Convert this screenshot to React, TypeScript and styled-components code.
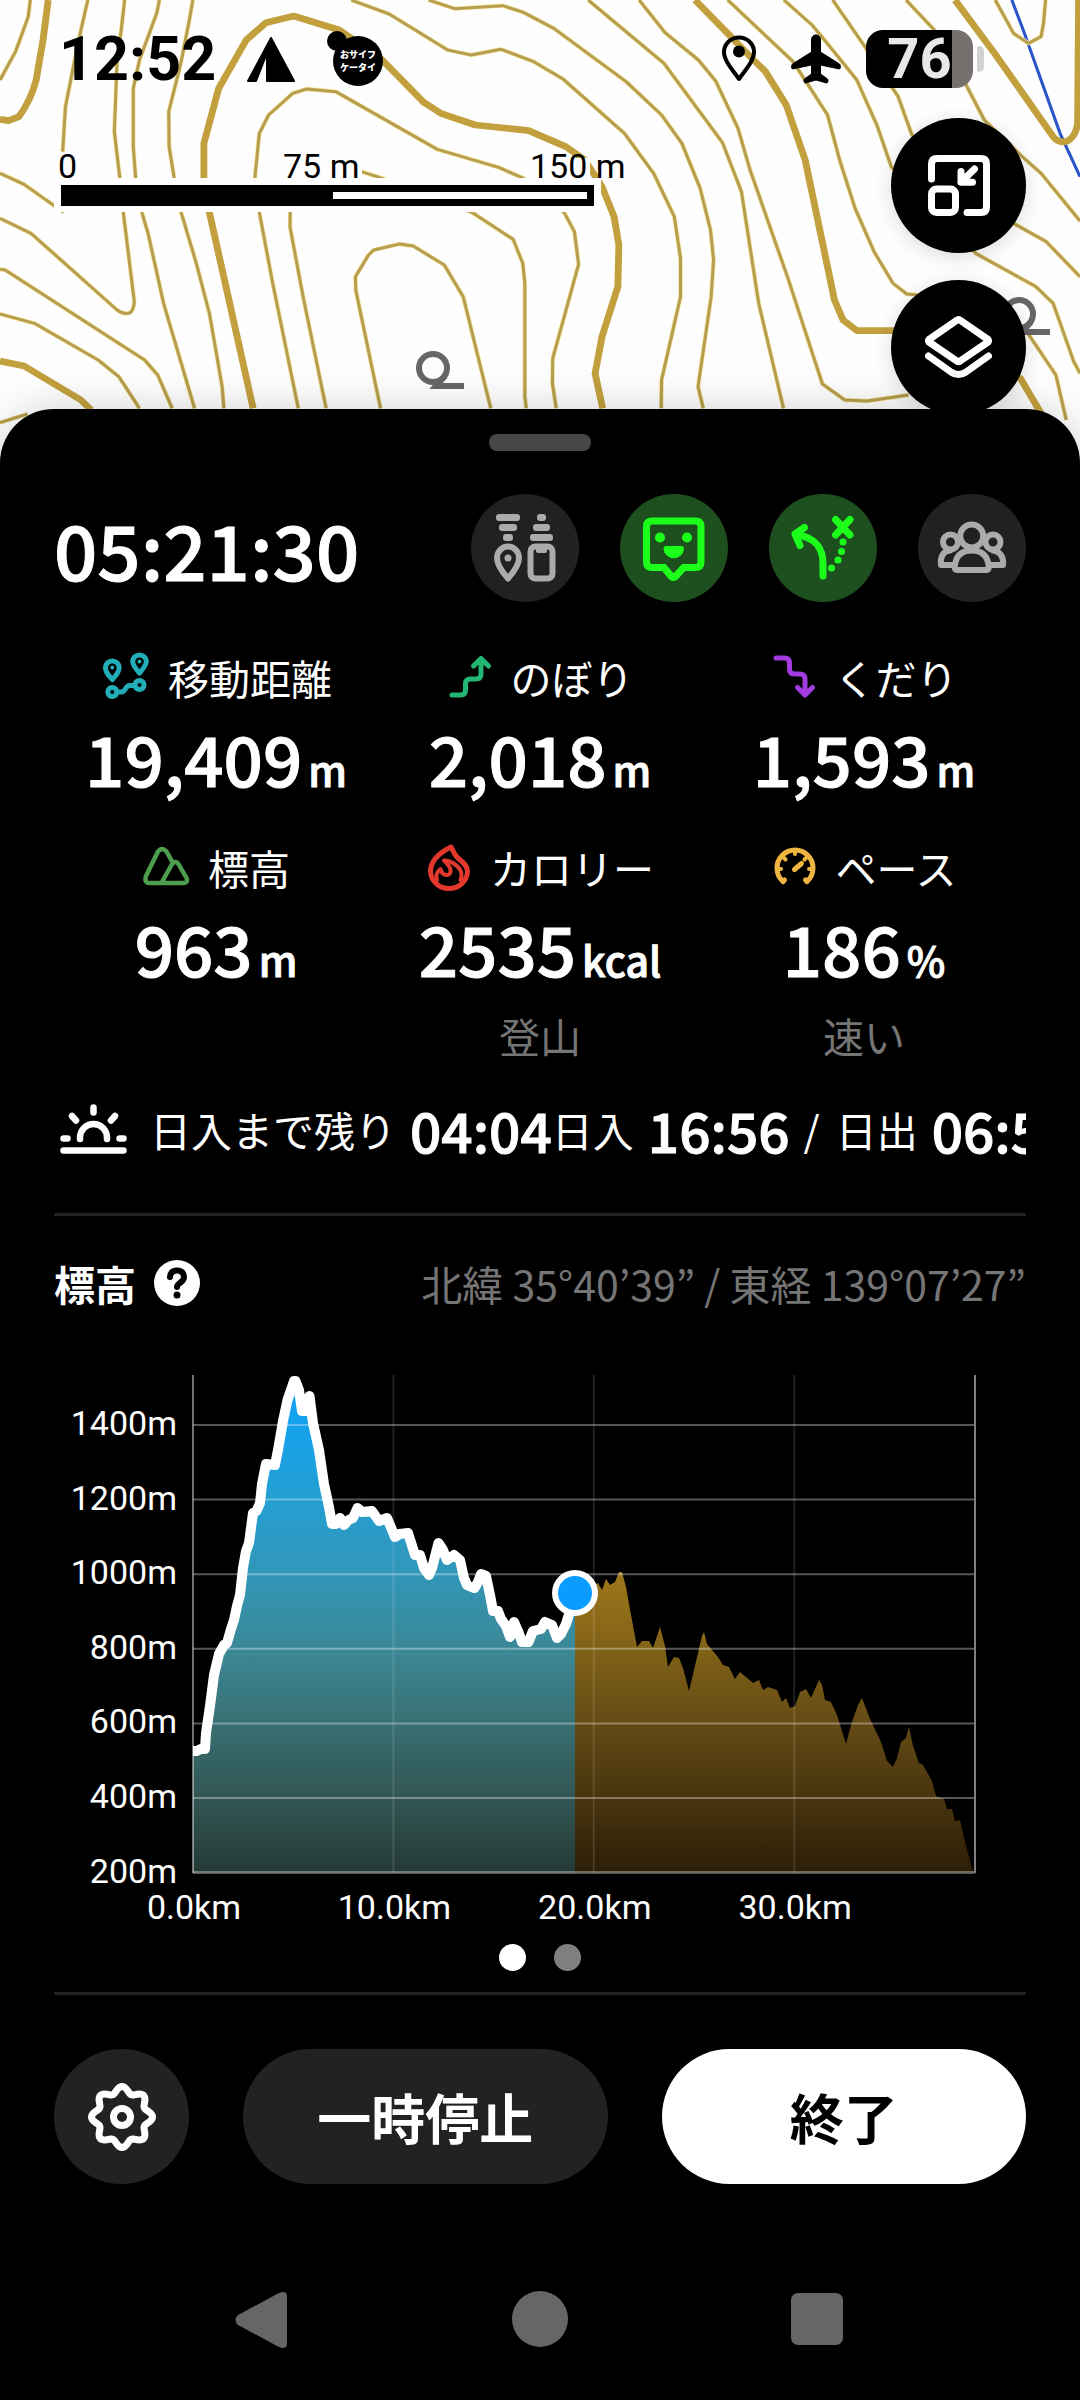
import React from "react";
import styled, { createGlobalStyle } from "styled-components";

const jp = `"Noto Sans CJK JP", "Noto Sans", sans-serif`;
const latin = `Roboto, "Noto Sans CJK JP", sans-serif`;

const GlobalStyle = createGlobalStyle`
  *, *::before, *::after { box-sizing: border-box; }
  html, body { margin: 0; background: #000; }
  body { font-family: ${jp}; color: #fff; overflow-x: hidden; }
  button { border: 0; padding: 0; font: inherit; color: inherit; cursor: pointer; }
  svg { display: block; flex: none; }
  h2, p, dl, dt, dd { margin: 0; font-weight: inherit; font-size: inherit; }
`;

const Page = styled.div`
  display: flex;
  flex-direction: column;
  min-height: 100vh;
`;

/* ---------- map ---------- */

const MapArea = styled.section`
  position: relative;
  height: 472px;
  background: #fefefe;
  overflow: hidden;
`;

const MapCanvas = styled.svg`
  position: absolute;
  inset: 0;
  width: 100%;
  height: 100%;
`;

const MapOverlay = styled.div`
  position: relative;
  display: flex;
  flex-direction: column;
`;

const StatusBar = styled.header`
  display: flex;
  align-items: center;
  justify-content: space-between;
  height: 118px;
  padding: 0 96px 0 59px;
  color: #000;
`;

const StatusGroup = styled.div<{ $gap: number }>`
  display: flex;
  align-items: center;
  gap: ${(p) => p.$gap}px;
`;

const Clock = styled.time`
  font: 700 61px/62px ${latin};
`;

const Battery = styled.div`
  display: flex;
  align-items: center;
  gap: 4px;
`;

const BatteryBody = styled.div`
  display: flex;
  align-items: center;
  justify-content: center;
  width: 107px;
  height: 58px;
  border-radius: 17px;
  background: linear-gradient(to right, #000 80%, #76706f 80%);
  color: #e8e8e8;
  font: 700 56px/58px ${latin};
`;

const BatteryTip = styled.div`
  width: 7px;
  height: 26px;
  border-radius: 2px 5px 5px 2px;
  background: #d2d0d0;
`;

const MapTools = styled.div`
  display: flex;
  justify-content: space-between;
  align-items: flex-start;
  padding: 0 54px 0 58px;
`;

const ScaleBar = styled.div`
  padding-top: 28px;
  color: #000;
`;

const ScaleLabels = styled.div`
  display: grid;
  grid-template-columns: 225px 247px auto;
  font: 400 34px/40px ${latin};
`;

const ScaleRule = styled.div`
  width: 533px;
  height: 21px;
  margin: -1px 0 0 3px;
  border: 7px solid #000;
  background: linear-gradient(to right, #000 51%, #fff 51%);
`;

const Fabs = styled.div`
  display: flex;
  flex-direction: column;
  gap: 27px;
`;

const Fab = styled.button`
  display: grid;
  place-items: center;
  width: 135px;
  height: 135px;
  border-radius: 50%;
  background: #000;
  color: #fff;
  box-shadow: 0 4px 20px rgba(0, 0, 0, 0.14);
`;

/* ---------- sheet ---------- */

const Sheet = styled.main`
  position: relative;
  display: flex;
  flex-direction: column;
  flex: 1;
  margin-top: -63px;
  padding: 25px 54px 0;
  border-radius: 54px 54px 0 0;
  background: #000;
  box-shadow: 0 0 44px rgba(0, 0, 0, 0.18);
`;

const Handle = styled.div`
  align-self: center;
  width: 102px;
  height: 17px;
  border-radius: 8px;
  background: #474747;
`;

const TimerRow = styled.div`
  display: flex;
  align-items: center;
  justify-content: space-between;
  margin-top: 43px;
`;

/* A medium cut with a thin outline: digits stay narrow but read as semibold. */
const Figure = styled.span`
  font-weight: 500;
  -webkit-text-stroke: 1px currentColor;
`;

const Timer = styled(Figure).attrs({ as: "time" })`
  font-size: 76px;
  line-height: 108px;
`;

const Toggles = styled.div`
  display: flex;
  gap: 41px;
`;

const Toggle = styled.button<{ $on?: boolean }>`
  display: grid;
  place-items: center;
  width: 108px;
  height: 108px;
  border-radius: 50%;
  background: ${(p) => (p.$on ? "#1e4f1e" : "#212121")};
  color: ${(p) => (p.$on ? "#1bff1b" : "#ababab")};
`;

const Stats = styled.dl`
  display: grid;
  grid-template-columns: repeat(3, 1fr);
  row-gap: 47px;
  margin-top: 52px;
`;

const Stat = styled.div`
  display: flex;
  flex-direction: column;
  align-items: center;
`;

const StatLabel = styled.dt`
  display: flex;
  align-items: center;
  gap: 18px;
  height: 46px;
  font-size: 41px;
  line-height: 46px;
  white-space: nowrap;
`;

const StatValue = styled(Figure).attrs({ as: "dd" })`
  display: flex;
  align-items: baseline;
  gap: 6px;
  height: 80px;
  margin-top: 17px;
  font-size: 69px;
  line-height: 80px;
`;

const Unit = styled.span`
  font-size: 41px;
`;

const StatNote = styled.dd`
  margin-top: 24px;
  color: #757575;
  font-size: 41px;
  line-height: 48px;
`;

const SunRow = styled.div`
  display: flex;
  align-items: center;
  height: 80px;
  margin-top: 30px;
  padding-left: 4px;
  overflow: hidden;
  white-space: nowrap;
  font-size: 41px;
  line-height: 80px;
`;

const SunText = styled.span<{ $before?: number }>`
  margin-left: ${(p) => p.$before ?? 0}px;
`;

const SunTime = styled(Figure).attrs({ as: "time" })`
  margin-left: 14px;
  font-size: 55px;
`;

const Divider = styled.hr<{ $top: number }>`
  width: 100%;
  height: 3px;
  margin: ${(p) => p.$top}px 0 0;
  border: 0;
  background: #222;
`;

const ChartHeader = styled.div`
  display: flex;
  align-items: center;
  justify-content: space-between;
  height: 46px;
  margin-top: 44px;
  font-size: 41px;
  line-height: 46px;
`;

const ChartTitle = styled.div`
  display: flex;
  align-items: center;
  gap: 18px;
  font-weight: 700;
`;

const HelpButton = styled.button`
  display: grid;
  place-items: center;
  width: 46px;
  height: 46px;
  border-radius: 50%;
  background: #fff;
  color: #000;
`;

const Coordinates = styled.p`
  color: #757575;
`;

const Chart = styled.svg`
  width: 100%;
  height: auto;
  margin-top: 44px;
  font: 400 34px ${latin};
`;

const Dots = styled.div`
  display: flex;
  justify-content: center;
  gap: 28px;
  margin-top: 14px;
`;

const Dot = styled.button<{ $active?: boolean }>`
  width: 27px;
  height: 27px;
  border-radius: 50%;
  background: ${(p) => (p.$active ? "#fff" : "#808080")};
`;

const Actions = styled.div`
  display: grid;
  grid-template-columns: 135px 1fr 1fr;
  gap: 54px;
  margin-top: 54px;
`;

const Action = styled.button<{ $primary?: boolean }>`
  display: grid;
  place-items: center;
  height: 135px;
  border-radius: 68px;
  background: ${(p) => (p.$primary ? "#fff" : "#222")};
  color: ${(p) => (p.$primary ? "#000" : "#fff")};
  font-weight: 700;
  font-size: 54px;
  line-height: 64px;
`;

const NavBar = styled.nav`
  display: flex;
  align-items: center;
  justify-content: space-between;
  padding: 107px 181px 53px;
`;

const NavButton = styled.button`
  display: grid;
  place-items: center;
  width: 56px;
  height: 56px;
  background: none;
  color: #666;
`;

/* ---------- map data ---------- */

const minorContours = [
  "M88 0 82 50 45 155 0 240",
  "M255 0 235 90 215 190 190 320 182 455",
  "M362 0 352 90 340 180 332 395 348 535 358 637 390 905Q388 930 378 938Q362 946 340 930L90 700 0 655",
  "M463 0 455 40 405 180 387 265 387 440 394 535 412 637 430 700 475 910 565 1225",
  "M560 0 548 70 525 190 490 335 491 440 506 535 526 637 570 790 608 940 625 1040 645 1160 650 1225",
  "M866 1225 790 840 753 637 740 535 753 400 780 345 850 280 890 267 975 275 1270 448 1450 503 1520 535 1638 637 1668 695 1680 793 1605 1075 1604 1150 1615 1225",
  "M947 1225 880 890 842 680 843 600 870 500 900 488 950 488 1050 515 1110 535 1370 637 1490 718 1518 790 1524 850 1524 1190 1528 1225",
  "M1105 1225 1033 870 1032 830 1070 765 1085 750 1160 732 1200 738 1290 795 1345 890 1425 1225",
  "M0 520 70 553 120 590 185 637",
  "M0 808 15 810 420 1080 458 1125 500 1225",
  "M0 942 100 970 285 1080 345 1130 405 1225",
  "M0 1268 80 1242",
  "M1020 0 1130 42 1300 150 1368 165 1455 148 1550 185 1636 238 1813 400 1898 520 1958 650 1976 775 1976 890 1921 1140 1920 1225",
  "M1245 0 1320 26 1460 17 1520 37 1608 85 1818 245 1921 345 1980 430 2033 565 2063 690 2072 780 2065 890 2027 1160 2042 1225",
  "M1708 0 1928 190 2098 428 2153 575 2203 910 2275 1225",
  "M1856 0 1931 98 2028 180 2078 243 2143 385 2178 510 2288 835 2388 1152 2453 1200 2518 1203 2638 1185",
  "M2113 0 2303 185 2403 345 2438 480 2483 625 2538 755 2593 850 2633 882 2658 884 2978 990 3066 1125 3096 1260",
  "M2276 0 2358 75 2398 125 2488 240 2548 380 2588 500 2833 760 3008 860 3058 910 3118 1085 3136 1120",
  "M2418 0 2508 135 2608 290 2648 405 2943 670 3038 725 3136 830",
  "M2631 0 2713 90 2768 180 2858 360 2963 465 3023 520 3136 663",
  "M2890 0 2943 100 2986 130 3023 110 3030 70 3036 0",
];

const majorContours = [
  "M140 0 125 120 105 240Q90 300 55 350L25 362 0 358",
  "M735 1225 608 637 592 535 592 430 635 265 715 120 772 68 853 48 985 90 1020 115 1110 180 1230 307 1280 340 1380 375 1535 392 1643 440 1698 480 1748 560 1783 650 1797 735 1794 860 1748 1010 1728 1120 1750 1225",
  "M0 1083 70 1098 235 1200 265 1230",
  "M2018 0 2113 100 2188 180 2223 215 2283 315 2338 480 2423 900 2448 960 2488 992 2598 992 2963 1135 3023 1240",
  "M2773 0 2888 160 3058 410Q3072 430 3098 424Q3124 410 3129 370L3132 0",
];

/* ---------- elevation data, in chart units ---------- */

const walked =
  "0,376 4,376 7.5,374 12,374 13,358 17,331 21,300 26,279 31,270 34,268 38,254 41,245 44,231 47,220 50,193 53,176 56,168 60,138 63.5,136 67,128 69,109 73,89 82,90 85,75 90,46 94.5,25 98,15 101,6 102.5,6 106,15 109,36 113,36 116.5,21 120,48 126,75 131,109 136,132 139,149 143,149 147,143 151,150 155.5,145 160,143 164.5,133 169,137 179,136 186,146 194,143 202,162 206.5,159 215,158 222,180 227,180 231,193 236,200 239,193 245.5,168 249.5,174 254,185 261,180 267,185 271,203 274,210 281.5,213 285,207 288,199 293,201 297,220 300,236 305,236 308,244 313,251 317,262 321,247 325,256 329,267 335.5,267 340,256 348,254 352,247 359,250 364,263 368,259 373,249 377,236 382,218";

const planned =
  "382,218 405,208 409,215 413,204 417,210 422,207 426,197 429,197 433,212 438,240 444,272 449,266 456,266 460,273 467,252 472,271 475,292 481,282 486,283 490,293 496,316 501,295 509,261 511,257 514,269 525,282 530,290 536,292 542,304 547,297 560,308 566,305 570,315 575,312 584,315 589,327 593,323 597,333 602,331 607,317 613,314 618,323 626,305 629,310 632,325 638,327 644,340 653,369 658,350 665,330 669,323 677,344 688,367 694,386 700,392 704,383 708,367 713,363 716,352 720,371 726,388 730,390 739,406 743,421 751,424 754,434 759,434 762,446 767,445 772,467 779,493 781,498";

const plotWidth = 782;
const plotHeight = 498;
const elevations = [1400, 1200, 1000, 800, 600, 400, 200].map((m, i) => ({ m, y: 50 + i * 74.6 }));
const distances = [0, 10, 20, 30].map((km) => ({ km, x: km * 20.04 }));

const gearPath =
  Array.from({ length: 161 }, (_, i) => {
    const a = (i / 160) * Math.PI * 2;
    const r = 27.3 + 3.2 * Math.cos(8 * a);
    return `${i ? "L" : "M"}${(34 + r * Math.cos(a)).toFixed(1)} ${(34 + r * Math.sin(a)).toFixed(1)}`;
  }).join("") + "Z";

/* ---------- icons ---------- */

type IconProps = { w: number; h: number; stroke?: number; color?: string; children: React.ReactNode };

const Icon = ({ w, h, stroke = 5, color = "currentColor", children }: IconProps) => (
  <svg
    width={w}
    height={h}
    viewBox={`0 0 ${w} ${h}`}
    fill="none"
    stroke={color}
    strokeWidth={stroke}
    strokeLinecap="round"
    strokeLinejoin="round"
    aria-hidden="true"
  >
    {children}
  </svg>
);

const TentIcon = () => (
  <Icon w={50} h={46} stroke={2}>
    <path fill="currentColor" d="M25 2 48 45H21V17L10 45H2Z" />
  </Icon>
);

const WalletIcon = () => (
  <svg width="58" height="58" viewBox="0 0 58 58">
    <circle cx="11" cy="11" r="10" />
    <circle cx="32" cy="31" r="25" />
    <g fill="#fff" fontFamily="Noto Sans CJK JP, sans-serif" fontWeight="900" fontSize="9" textAnchor="middle">
      <text x="32" y="28">おサイフ</text>
      <text x="32" y="41">ケータイ</text>
    </g>
  </svg>
);

const LocationIcon = () => (
  <Icon w={36} h={48} stroke={4}>
    <path d="M18 44C10 33 3 25 3 17a15 14.500 0 0 1 30 0C33 25 26 33 18 44Z" />
    <circle cx="18" cy="16.500" r="6" fill="currentColor" stroke="none" />
  </Icon>
);

const PlaneIcon = () => (
  <Icon w={50} h={50} stroke={1}>
    <path
      fill="currentColor"
      d="M25 1c3 0 4.500 2 4.500 5v12l19 12c1 1 1.500 4 0 5l-19-4v9l7 5c1 1 .5 4-1 4L25 46l-10.500 3c-1.500 0-2-3-1-4l7-5v-9l-19 4c-1.500-1-1-4 0-5l19-12V6c0-3 1.500-5 4.500-5Z"
    />
  </Icon>
);

const ShrinkIcon = () => (
  <Icon w={66} h={66} stroke={7}>
    <path d="M5.500 26V11Q5.500 5.500 11 5.500H55Q60.500 5.500 60.500 11V54Q60.500 59.500 55 59.500H41" />
    <rect x="5.500" y="36" width="24" height="23.500" rx="5" />
    <path d="M48.500 16 35 29M35 18.500V29.300H46.500" />
  </Icon>
);

const LayersIcon = () => (
  <Icon w={68} h={66} stroke={7}>
    <path d="M32 5.200Q33.400 4 35 5.200L63 24.500Q64 25.700 63 27L35 46.200Q33.400 47.200 32 46.200L4 27Q3 25.700 4 24.500Z" />
    <path d="M3.500 41 26 57Q33.400 62 41 57L63.500 41" />
  </Icon>
);

const DeviceSyncIcon = () => (
  <Icon w={64} h={72}>
    <g fill="currentColor" stroke="none">
      <rect x="3" y="2" width="24" height="7" rx="3" />
      <rect x="6" y="12" width="18" height="7" rx="3" />
      <rect x="10" y="22" width="10" height="7" rx="3" />
      <rect x="44" y="2" width="9" height="7" rx="3" />
      <rect x="40" y="12" width="17" height="7" rx="3" />
      <rect x="37" y="22" width="23" height="7" rx="3" />
      <circle cx="15" cy="46" r="3.500" />
      <rect x="43" y="35" width="11" height="6" rx="2" />
    </g>
    <path d="M15 66.500Q4 54 4 46a11 11.500 0 0 1 22 0Q26 54 15 66.500Z" strokeWidth="6" />
    <rect x="37.500" y="34.500" width="22" height="32" rx="5" strokeWidth="6" />
  </Icon>
);

const FaceIcon = () => (
  <Icon w={68} h={68} stroke={7}>
    <path d="M24.500 53.500H12Q6.500 53.500 6.500 48V12.500Q6.500 7 12 7H55.500Q61 7 61 12.500V48Q61 53.500 55.500 53.500H43.500L36 62Q33.500 65 31 62Z" />
    <path d="M26 53.500H42" stroke="#1e4f1e" strokeWidth="8" strokeLinecap="butt" />
    <path d="M24 53.500 31 62Q33.500 65 36 62L43.500 53.500" />
    <g fill="currentColor" stroke="none">
      <circle cx="20" cy="23.500" r="5" />
      <circle cx="47" cy="23.500" r="5" />
      <path d="M26 32H41Q44 32 44 35A10.300 10.300 0 0 1 23.500 35Q23.500 32 26 32Z" />
    </g>
  </Icon>
);

const RouteIcon = () => (
  <Icon w={68} h={68} stroke={7}>
    <path d="M34 62V50C34 34 27 24 8 20.500M15.500 13.500 6 20 11 31.500" />
    <path d="M46.500 5.500 61 21M61 5.500 46.500 21" />
    <g fill="currentColor" stroke="none">
      <circle cx="42.500" cy="54" r="3.500" />
      <circle cx="49" cy="46" r="3.500" />
      <circle cx="52.500" cy="37.500" r="3.500" />
      <circle cx="54" cy="28" r="3.500" />
    </g>
  </Icon>
);

const GroupIcon = () => (
  <Icon w={70} h={58} stroke={6}>
    <circle cx="13.500" cy="23" r="7.500" />
    <circle cx="56" cy="23" r="7.500" />
    <path d="M15 46H4C3 38 6 32 13 31.500M54 46H66C67 38 63 32 56 31.500" />
    <circle cx="34.700" cy="17" r="11.500" fill="#212121" />
    <path d="M20 51Q17.500 51 17.700 48C18.500 37 24 31.500 34.700 31.500S51 37 51.700 48Q52 51 49.500 51Z" fill="#212121" />
  </Icon>
);

const DistanceIcon = () => (
  <Icon w={50} h={50} color="#22aeb8">
    <path d="M12.300 27.500Q5 20 5.500 15.500a6.800 6.500 0 0 1 13.600 0Q19.500 20 12.300 27.500ZM39.500 21Q32.500 13 32.700 9.500a6.800 6.500 0 0 1 13.600 0Q46.500 13 39.500 21Z" />
    <circle cx="12.300" cy="40" r="4.500" />
    <circle cx="39.500" cy="33" r="4.500" />
    <path d="M17 40H21C27 40 24 33.500 30 33.500H35" />
    <circle cx="12.300" cy="15.500" r="1" strokeWidth="2" />
    <circle cx="39.500" cy="9.500" r="1" strokeWidth="2" />
  </Icon>
);

const AscentIcon = () => (
  <Icon w={46} h={48} color="#22b573">
    <path d="M5 42H13.500Q18.500 42 18.500 37V31Q18.500 26 23.500 26H29Q34 26 34 21V6M26.500 13 34 5.500 41.500 13" />
  </Icon>
);

const DescentIcon = () => (
  <Icon w={46} h={48} color="#a23be0">
    <path d="M5 5H13.500Q18.500 5 18.500 10V16Q18.500 21 23.500 21H29Q34 21 34 26V41M26.500 34.500 34 42 41.500 34.500" />
  </Icon>
);

const MountainIcon = () => (
  <Icon w={48} h={44} stroke={4.5} color="#4c9e4c">
    <path d="M31 18 24.500 6.500Q20 1.500 16 6.500L4 31Q2 38 7.500 38H41Q46.500 38 44.500 33L37 20Q33.500 14 29.500 20L20 37" />
  </Icon>
);

const FlameIcon = () => (
  <Icon w={46} h={50} color="#e2382e">
    <path d="M25 5C17 9 4.500 17 4.500 29.500A18.500 17.500 0 0 0 23 46.500A18.500 17.500 0 0 0 41.500 29.500C41.500 21 32 18 29 12.500Q27 8.500 25 5Z" />
    <path d="M11 38C9.500 34 11 30 14.500 27Q16 33 20.500 33C24 33 25.500 29.500 24 26C23 23 21 22 18 18.500C26 18.500 36 26 35.500 33Q35.500 36 34.500 38" strokeWidth="4" />
  </Icon>
);

const PaceIcon = () => (
  <Icon w={46} h={46} color="#efb541">
    <path d="M11 37.500A18 18 0 1 1 35 37.500" />
    <path d="M23 6.500V10M6 25H9M37 25H40M11.500 13.500 13.500 15.500M34.500 13.500 32.500 15.500" strokeWidth="4" />
    <path d="M11 37.500 12.500 36M35 37.500 33.500 36M22.500 25.500 29.500 19.500" />
  </Icon>
);

const SunsetIcon = () => (
  <Icon w={72} h={54} stroke={6.5}>
    <path d="M5.500 48.500H65.500M5.500 36.500H9.500M61.500 36.500H65.500M22 37V35.500a13.500 13.500 0 0 1 27 0V37M35.500 5.500V10.500M14 14 18 18.500M57 14 53 18.500" />
  </Icon>
);

const GearIcon = () => (
  <Icon w={68} h={68} stroke={7}>
    <path d={gearPath} />
    <circle cx="34" cy="34" r="8.500" />
  </Icon>
);

const QuestionIcon = () => (
  <Icon w={30} h={36} stroke={6}>
    <path d="M8 12Q8.500 5.500 15 5.500T22 12Q22 15 18.500 17.500T15 22" />
    <circle cx="15" cy="30" r="3.500" fill="currentColor" stroke="none" />
  </Icon>
);

/* ---------- screen ---------- */

const stats = [
  { label: "移動距離", value: "19,409", unit: "m", icon: <DistanceIcon /> },
  { label: "のぼり", value: "2,018", unit: "m", icon: <AscentIcon /> },
  { label: "くだり", value: "1,593", unit: "m", icon: <DescentIcon /> },
  { label: "標高", value: "963", unit: "m", icon: <MountainIcon /> },
  { label: "カロリー", value: "2535", unit: "kcal", icon: <FlameIcon />, note: "登山" },
  { label: "ペース", value: "186", unit: "%", icon: <PaceIcon />, note: "速い" },
];

const ContourMap = () => (
  <MapCanvas viewBox="0 0 1080 472" preserveAspectRatio="xMinYMin slice" aria-hidden="true">
    <g transform="scale(0.34439 0.33333)" fill="none" strokeLinejoin="round">
      <path d="M2938 0 2973 95 3078 400 3136 530" stroke="#2a55c8" strokeWidth="9" />
      {minorContours.map((d) => (
        <g key={d}>
          <path d={d} stroke="#f8e6a0" strokeWidth="13" />
          <path d={d} stroke="#b69f50" strokeWidth="9" />
        </g>
      ))}
      {majorContours.map((d) => (
        <path key={d} d={d} stroke="#c3a03e" strokeWidth="20" />
      ))}
    </g>
    <path fill="#fefefe" d="M54 178H601V212H54ZM280 158H362V184H280ZM528 158H590V186H528ZM56 155H78V184H56Z" />
    {[[433, 368], [1019, 314]].map(([x, y]) => (
      <g key={x} fill="none" stroke="#676767" strokeWidth="6">
        <circle cx={x} cy={y} r="14" />
        <path d={`M${x + 12} ${y + 8}L${x + 3} ${y + 18}H${x + 31}`} />
      </g>
    ))}
  </MapCanvas>
);

const ElevationChart = () => (
  <Chart viewBox="0 0 972 580" role="img" aria-label="標高グラフ">
    <defs>
      <linearGradient id="walkedFill" gradientUnits="userSpaceOnUse" x1="0" y1="0" x2="0" y2={plotHeight}>
        <stop offset="0.05" stopColor="#10a3f5" />
        <stop offset="0.25" stopColor="#249fd2" />
        <stop offset="0.4" stopColor="#3296b8" />
        <stop offset="0.55" stopColor="#3b8896" />
        <stop offset="0.7" stopColor="#397073" />
        <stop offset="0.85" stopColor="#315553" />
        <stop offset="1" stopColor="#243a35" />
      </linearGradient>
      <linearGradient id="plannedFill" gradientUnits="userSpaceOnUse" x1="0" y1="190" x2="0" y2={plotHeight}>
        <stop offset="0" stopColor="#a27a1c" />
        <stop offset="0.3" stopColor="#7d5f17" />
        <stop offset="0.6" stopColor="#5a4213" />
        <stop offset="1" stopColor="#2c1e06" />
      </linearGradient>
    </defs>
    <g transform="translate(139 25)">
      <polygon points={`0,${plotHeight} ${walked} 382,${plotHeight}`} fill="url(#walkedFill)" />
      <polygon points={`382,${plotHeight} ${planned}`} fill="url(#plannedFill)" />
      {elevations.map(({ m, y }) => (
        <path key={m} d={`M0 ${y}H${plotWidth}`} stroke="#fff" strokeOpacity="0.34" strokeWidth={m === 200 ? 3 : 2} />
      ))}
      {distances.map(({ km, x }) => (
        <path key={km} d={`M${x} 0V${plotHeight}`} stroke="#fff" strokeOpacity={km ? 0.12 : 0.45} strokeWidth="2" />
      ))}
      <path d={`M${plotWidth} 0V${plotHeight}`} stroke="#808080" strokeWidth="2" />
      <polyline points={walked} fill="none" stroke="#fff" strokeWidth="10" strokeLinejoin="round" />
      <circle cx="382" cy="218" r="20" fill="#0a9dff" stroke="#fff" strokeWidth="6" />
    </g>
    <g fill="#fff">
      {elevations.map(({ m, y }) => (
        <text key={m} x="123" y={y + 35} textAnchor="end">{m}m</text>
      ))}
      {distances.map(({ km, x }) => (
        <text key={km} x={140 + x} y="569" textAnchor="middle">{km.toFixed(1)}km</text>
      ))}
    </g>
  </Chart>
);

export default function App() {
  return (
    <Page>
      <GlobalStyle />
      <MapArea>
        <ContourMap />
        <MapOverlay>
          <StatusBar>
            <StatusGroup $gap={30}>
              <Clock>12:52</Clock>
              <TentIcon />
              <WalletIcon />
            </StatusGroup>
            <StatusGroup $gap={25}>
              <StatusGroup $gap={34}>
                <LocationIcon />
                <PlaneIcon />
              </StatusGroup>
              <Battery>
                <BatteryBody>76</BatteryBody>
                <BatteryTip />
              </Battery>
            </StatusGroup>
          </StatusBar>
          <MapTools>
            <ScaleBar>
              <ScaleLabels>
                <span>0</span>
                <span>75 m</span>
                <span>150 m</span>
              </ScaleLabels>
              <ScaleRule />
            </ScaleBar>
            <Fabs>
              <Fab aria-label="地図を縮小"><ShrinkIcon /></Fab>
              <Fab aria-label="レイヤー"><LayersIcon /></Fab>
            </Fabs>
          </MapTools>
        </MapOverlay>
      </MapArea>

      <Sheet>
        <Handle />
        <TimerRow>
          <Timer>05:21:30</Timer>
          <Toggles>
            <Toggle aria-label="端末連携"><DeviceSyncIcon /></Toggle>
            <Toggle $on aria-label="フィールドメモ"><FaceIcon /></Toggle>
            <Toggle $on aria-label="ルート案内"><RouteIcon /></Toggle>
            <Toggle aria-label="グループ"><GroupIcon /></Toggle>
          </Toggles>
        </TimerRow>

        <Stats>
          {stats.map((s) => (
            <Stat key={s.label}>
              <StatLabel>{s.icon}{s.label}</StatLabel>
              <StatValue>{s.value}<Unit>{s.unit}</Unit></StatValue>
              {s.note && <StatNote>{s.note}</StatNote>}
            </Stat>
          ))}
        </Stats>

        <SunRow>
          <SunsetIcon />
          <SunText $before={20}>日入まで残り</SunText>
          <SunTime>04:04</SunTime>
          <SunText>日入</SunText>
          <SunTime>16:56</SunTime>
          <SunText $before={14}>/</SunText>
          <SunText $before={16}>日出</SunText>
          <SunTime>06:51</SunTime>
        </SunRow>

        <Divider $top={44} />
        <ChartHeader>
          <ChartTitle>
            <h2>標高</h2>
            <HelpButton aria-label="ヘルプ"><QuestionIcon /></HelpButton>
          </ChartTitle>
          <Coordinates>北緯 35°40’39” / 東経 139°07’27”</Coordinates>
        </ChartHeader>
        <ElevationChart />
        <Dots>
          <Dot $active aria-label="1ページ目" />
          <Dot aria-label="2ページ目" />
        </Dots>

        <Divider $top={21} />
        <Actions>
          <Action aria-label="設定"><GearIcon /></Action>
          <Action>一時停止</Action>
          <Action $primary>終了</Action>
        </Actions>
        <NavBar>
          <NavButton aria-label="戻る">
            <svg width="56" height="58" viewBox="0 0 56 58" fill="currentColor">
              <path d="M3 24 42 3Q52 -2 52 6V52Q52 60 42 55L3 34Q-2 29 3 24Z" />
            </svg>
          </NavButton>
          <NavButton aria-label="ホーム">
            <svg width="56" height="56" viewBox="0 0 56 56" fill="currentColor"><circle cx="28" cy="28" r="28" /></svg>
          </NavButton>
          <NavButton aria-label="アプリ履歴">
            <svg width="52" height="52" viewBox="0 0 52 52" fill="currentColor"><rect width="52" height="52" rx="7" /></svg>
          </NavButton>
        </NavBar>
      </Sheet>
    </Page>
  );
}
